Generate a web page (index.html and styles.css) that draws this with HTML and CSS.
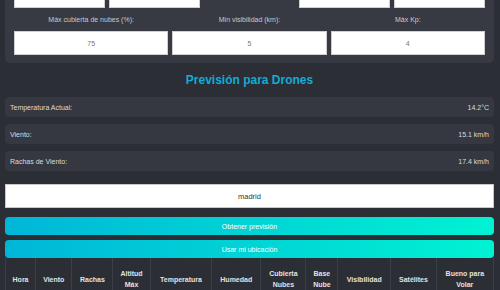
FILE: index.html
```html
<!DOCTYPE html>
<html>

<head>
  <meta charset="UTF-8">
  <meta name="viewport" content="width=device-width, initial-scale=1.0">
  <title>Previsión para Drones</title>
  <link rel="stylesheet" href="styles.css">
</head>

<body>
  <div class="app">
    <!-- filtros (la fila de arriba queda fuera de la vista) -->
    <div class="filters">
      <div class="filter-row filter-row-5">
        <input type="text">
        <input type="text">
        <div class="field-empty"></div>
        <input type="text">
        <input type="text">
      </div>
      <div class="filter-row filter-row-3">
        <div class="field">
          <label>Máx cubierta de nubes (%):</label>
          <input type="text" value="75">
        </div>
        <div class="field">
          <label>Min visibilidad (km):</label>
          <input type="text" value="5">
        </div>
        <div class="field">
          <label>Máx Kp:</label>
          <input type="text" value="4">
        </div>
      </div>
    </div>

    <h2 class="title">Previsión para Drones</h2>

    <div class="current">
      <div class="current-row">
        <span>Temperatura Actual:</span>
        <span>14.2°C</span>
      </div>
      <div class="current-row">
        <span>Viento:</span>
        <span>15.1 km/h</span>
      </div>
      <div class="current-row">
        <span>Rachas de Viento:</span>
        <span>17.4 km/h</span>
      </div>
    </div>

    <input class="city" type="text" value="madrid">

    <div class="actions">
      <button class="btn">Obtener previsión</button>
      <button class="btn">Usar mi ubicación</button>
    </div>

    <table class="forecast">
      <thead>
        <tr>
          <th>Hora</th>
          <th>Viento</th>
          <th>Rachas</th>
          <th>Altitud<br>Máx</th>
          <th>Temperatura</th>
          <th>Humedad</th>
          <th>Cubierta<br>Nubes</th>
          <th>Base<br>Nube</th>
          <th>Visibilidad</th>
          <th>Satélites</th>
          <th>Bueno para<br>Volar</th>
        </tr>
      </thead>
    </table>
  </div>
</body>

</html>
```

FILE: styles.css
```css
* {
  box-sizing: border-box;
}

html,
body {
  margin: 0;
  background: #2b2e35;
  font-family: "Liberation Sans", Arial, sans-serif;
  color: #d6d6d6;
  overflow: hidden;
}

.app {
  padding: 0 6px 0 5px;
}

.filters {
  margin-top: -25px;
  padding: 9px 9px 8px;
  background: #373a42;
  border-radius: 5px;
}

.filter-row {
  display: grid;
  gap: 4px;
}

.filter-row + .filter-row {
  margin-top: 7px;
}

.filter-row-5 {
  grid-template-columns: repeat(5, 1fr);
}

.filter-row-3 {
  grid-template-columns: repeat(3, 1fr);
}

.field {
  display: flex;
  flex-direction: column;
  align-items: stretch;
}

.field label {
  height: 9px;
  margin-bottom: 7px;
  font-size: 7px;
  line-height: 9px;
  text-align: center;
  color: #c9c9c9;
}

.filters input {
  min-width: 0;
  height: 24px;
  border: 1px solid #d0d0d0;
  background: #fff;
  font-family: inherit;
  font-size: 7px;
  color: #777;
  text-align: center;
  outline: none;
}

.title {
  margin: 10px 0 10px;
  font-size: 12px;
  line-height: 14px;
  font-weight: bold;
  text-align: center;
  color: #12acd6;
}

.current {
  display: flex;
  flex-direction: column;
  gap: 7px;
}

.current-row {
  display: flex;
  justify-content: space-between;
  align-items: center;
  height: 20px;
  padding: 0 5px;
  background: #353840;
  border-radius: 4px;
  font-size: 7px;
  color: #dcdcdc;
}

.city {
  display: block;
  width: 100%;
  height: 24px;
  margin-top: 13px;
  border: 1px solid #c8c8c8;
  background: #fff;
  font-family: inherit;
  font-size: 7.5px;
  color: #333;
  text-align: center;
  outline: none;
  text-decoration: underline wavy #e05a5a;
  text-decoration-thickness: 1px;
  text-underline-offset: 2px;
}

.actions {
  display: flex;
  flex-direction: column;
  gap: 5px;
  margin-top: 9px;
}

.btn {
  height: 18px;
  border: none;
  border-radius: 4px;
  background: linear-gradient(90deg, #00b6d8, #00f2d3);
  font-family: inherit;
  font-size: 7px;
  color: #fff;
}

.forecast {
  width: 100%;
  border-collapse: collapse;
}

.forecast th {
  padding: 10px 4px 12px;
  border-left: 1px solid #3b3f48;
  border-right: 1px solid #3b3f48;
  font-size: 7px;
  line-height: 11px;
  font-weight: bold;
  color: #e2e2e2;
}
```
